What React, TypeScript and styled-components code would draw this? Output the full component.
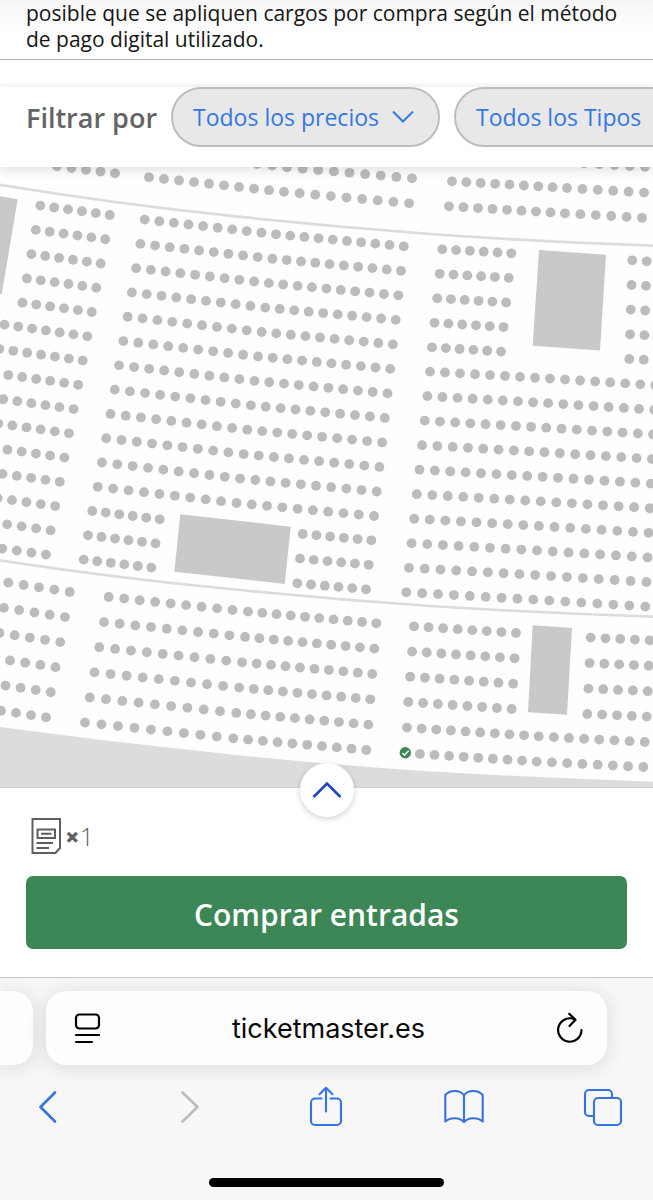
import {useState} from 'react';
import styled, {createGlobalStyle, css} from 'styled-components';

type Point = [number, number];
type SectionType = {
  // 첫 줄과 마지막 줄의 꺾이는 좌표
  first: Point[];
  last: Point[];
  rows: number;
  // 구간별 좌석 간격 수
  gaps: number[];
};

const GlobalStyle = createGlobalStyle`
  * {
    box-sizing: border-box;
  }

  body {
    margin: 0;
    background-color: #fff;
    font-family: 'Open Sans', sans-serif;
  }

  button {
    padding: 0;
    border: 0;
    background: none;
    font-family: inherit;
    cursor: pointer;
  }

  svg {
    display: block;
    flex-shrink: 0;
  }
`;

const AlignCenter = css`
  display: flex;
  justify-content: center;
  align-items: center;
`;

const Wrapper = styled.div`
  min-height: 100vh;
  display: flex;
  flex-direction: column;
  overflow-x: hidden;
`;

const Notice = styled.p`
  margin: 0;
  padding: 0 26px 7px;
  border-bottom: 1px solid #adadad;
  background: linear-gradient(180deg, #f5f5f5 0, #fff 30px);
  color: #161616;
  font-size: 21px;
  line-height: 26px;
`;

const FilterBar = styled.div`
  position: relative;
  z-index: 1;
  margin-top: 27px;
  padding: 0 0 20px 26px;
  display: flex;
  align-items: center;
  gap: 14px;
  background-color: #fff;
  box-shadow: 0 2px 12px rgba(0, 0, 0, 0.14);
  clip-path: inset(-4px 0 -20px 0);
  white-space: nowrap;
`;

const FilterLabel = styled.span`
  color: #646464;
  font-size: 27px;
  font-weight: 600;
`;

const FilterButton = styled.button`
  && {
    height: 60px;
    padding: 0 24px 0 20px;
    border: 2px solid #bdbdbd;
    border-radius: 30px;
    background-color: #e8e8e8;
  }
  ${AlignCenter}
  flex-shrink: 0;
  gap: 13px;
  color: #3478e5;
  font-size: 23px;
`;

const SeatMap = styled.svg`
  width: 100%;
  height: auto;
  background-color: #fefefe;
`;

const BuyPanel = styled.div`
  position: relative;
  padding: 30px 26px 28px;
  border-top: 1px solid #d0d0d0;
  border-bottom: 1px solid #c9c9c9;
  background-color: #fff;
`;

const ToggleButton = styled.button`
  && {
    position: absolute;
    top: -25px;
    left: calc(50% - 27px);
    width: 54px;
    height: 54px;
    border-radius: 50%;
    background-color: #fff;
  }
  ${AlignCenter}
  box-shadow: 0 2px 6px rgba(0, 0, 0, 0.18);
`;

const TicketCount = styled.div`
  display: flex;
  align-items: center;
  gap: 4px;
  padding-left: 5px;
  margin-bottom: 22px;
  color: #5f5f5f;
  font-size: 25px;
  font-weight: 300;
  line-height: 36px;

  & b {
    font-weight: 800;
  }
`;

const BuyButton = styled.button`
  && {
    width: 100%;
    height: 73px;
    padding-top: 3px;
    border-radius: 7px;
    background-color: #3d8656;
  }
  color: #fff;
  font-size: 30px;
  font-weight: 600;
`;

const Browser = styled.footer`
  flex: 1;
  padding-top: 13px;
  display: flex;
  flex-direction: column;
  background-color: #f7f7f7;
`;

const TabRow = styled.div`
  display: flex;
  gap: 13px;
  padding-right: 46px;
`;

const tabCard = css`
  height: 74px;
  background-color: #fdfdfd;
  box-shadow: 0 2px 20px rgba(0, 0, 0, 0.12);
`;

const PreviousTab = styled.div`
  width: 33px;
  border-radius: 0 20px 20px 0;
  ${tabCard}
`;

const AddressBar = styled.div`
  flex: 1;
  padding: 0 23px 0 27px;
  display: flex;
  justify-content: space-between;
  align-items: center;
  border-radius: 20px;
  ${tabCard}
`;

const Address = styled.button`
  color: #0a0a0a;
  && {
    font-family: 'Inter', sans-serif;
  }
  font-size: 27px;
`;

const Toolbar = styled.nav`
  display: flex;
  justify-content: space-between;
  padding: 20px 30px 0 28px;
`;

const HomeIndicator = styled.div`
  width: 36%;
  height: 9px;
  margin: auto auto 13px;
  border-radius: 5px;
  background-color: #000;
`;

// 좌석 구역
const sections: SectionType[] = [
  {first: [[57, 166], [115, 173]], last: [[57, 166], [115, 173]], rows: 1, gaps: [4]},
  {
    first: [[153, 152], [287, 167], [412, 178]],
    last: [[149, 177], [284, 191.5], [409, 203]],
    rows: 2,
    gaps: [9, 8],
  },
  {first: [[584, 163], [645, 166.5]], last: [[584, 163], [645, 166.5]], rows: 1, gaps: [4]},
  {
    first: [[452, 181], [567, 187.7], [644, 192.3]],
    last: [[449, 206], [565, 213], [642, 217.5]],
    rows: 2,
    gaps: [8, 5],
  },
  {first: [[40.3, 205.3], [109.7, 214.7]], last: [[22.4, 302.4], [91.7, 311.7]], rows: 5, gaps: [5]},
  {first: [[-9.3, 322.4], [87.3, 336]], last: [[-56, 540.3], [46, 554.3]], rows: 10, gaps: [7]},
  {
    first: [[144.7, 219.3], [276, 234], [403.7, 246]],
    last: [[97.7, 486.5], [236.5, 502.7], [374, 515.7]],
    rows: 12,
    gaps: [9, 9],
  },
  {first: [[92.3, 510.7], [159.7, 519]], last: [[83.7, 559.3], [151.3, 567.3]], rows: 3, gaps: [5]},
  {first: [[302.7, 533.7], [371.3, 540]], last: [[297.3, 583], [366, 589]], rows: 3, gaps: [5]},
  {first: [[442.3, 249], [511.3, 253]], last: [[432, 347], [501, 351.3]], rows: 5, gaps: [5]},
  {first: [[632.3, 260], [646.7, 261]], last: [[629.3, 358.7], [643.7, 359.4]], rows: 5, gaps: [1]},
  {
    first: [[430, 371.3], [550, 378.3], [655.3, 385]],
    last: [[406.3, 592], [533.3, 599.3], [645.3, 606.3]],
    rows: 10,
    gaps: [8, 7],
  },
  {first: [[-7, 580], [69.7, 591.7]], last: [[-29, 706], [46, 717]], rows: 6, gaps: [5]},
  {
    first: [[108.7, 596.7], [248, 611.3], [376.3, 623]],
    last: [[85, 722.3], [233.3, 738], [366.3, 749.7]],
    rows: 6,
    gaps: [9, 9],
  },
  {first: [[414, 626], [516, 632.7]], last: [[408.3, 701.7], [511.7, 708.7]], rows: 4, gaps: [7]},
  {first: [[590.7, 637.3], [649.7, 640]], last: [[587.3, 713.7], [646.7, 716.3]], rows: 4, gaps: [4]},
  {
    first: [[407, 727.3], [538.7, 736], [644.7, 741.7]],
    last: [[405.3, 752.7], [536.7, 761.3], [643.3, 766.7]],
    rows: 2,
    gaps: [9, 7],
  },
];

const mix = (a: Point, b: Point, t: number): Point => [a[0] + (b[0] - a[0]) * t, a[1] + (b[1] - a[1]) * t];

// 구역 하나의 모든 좌석 좌표 계산
const getSeats = ({first, last, rows, gaps}: SectionType) => {
  const seats: Point[] = [];
  for (let row = 0; row < rows; row++) {
    const stops = first.map((point, i) => mix(point, last[i], rows > 1 ? row / (rows - 1) : 0));
    seats.push(stops[0]);
    gaps.forEach((gap, i) => {
      for (let n = 1; n <= gap; n++) {
        seats.push(mix(stops[i], stops[i + 1], n / gap));
      }
    });
  }
  return seats;
};

const allSeats = sections.flatMap(getSeats);

const Seats = () => (
  <SeatMap viewBox="0 167 653 620" role="img" aria-label="Mapa de asientos">
    <path
      d="M0 727Q110 742 220 753.3Q320 764 420 770.7Q540 778 653 781.7V787H0Z"
      fill="#dcdcdc"
    />
    <g fill="none" stroke="#dcdcdc" strokeWidth="2.7">
      <path d="M-2 184.5Q108 202.5 220 214.7Q325 226 430 234Q540 242 655 245.7" />
      <path d="M-2 560Q108 577 220 588Q325 599 430 606Q540 613 655 616.7" />
    </g>
    <g fill="#c9c9c9">
      <path d="M0 196.3L17.7 199.3L1.7 294.3H0Z" />
      <path d="M539 250L606 254.7L600 350.5L532.7 345.7Z" />
      <path d="M180.3 514.3L290.7 526.7L284.7 584L174.3 571.7Z" />
      <path d="M532.7 625.3L572 628L567 714.7L528 712.3Z" />
    </g>
    <g fill="#bcbcbc">
      {allSeats.map(([x, y], i) => (
        <circle key={i} cx={x} cy={y + 0.3} r="4.9" />
      ))}
    </g>
    <circle cx="405.3" cy="752.7" r="5.7" fill="#3d8656" />
    <path d="M402.3 753L404.5 755.2L408.7 750.6" fill="none" stroke="#fff" strokeWidth="1.4" />
  </SeatMap>
);

const ArrowDown = () => (
  <svg width="22" height="14" viewBox="0 0 22 14" fill="none" stroke="currentColor" strokeWidth="2">
    <path d="M1 1.5L11 11.5L21 1.5" />
  </svg>
);

const App = () => {
  // 티켓 상세 오픈 state
  const [openDetail, setOpenDetail] = useState<boolean>(false);

  return (
    <>
      <GlobalStyle />
      <Wrapper>
        <Notice>
          posible que se apliquen cargos por compra según el método de pago digital utilizado.
        </Notice>
        <FilterBar>
          <FilterLabel>Filtrar por</FilterLabel>
          <FilterButton>
            Todos los precios
            <ArrowDown />
          </FilterButton>
          <FilterButton>
            Todos los Tipos
            <ArrowDown />
          </FilterButton>
        </FilterBar>

        <Seats />

        <BuyPanel>
          <ToggleButton
            aria-label="Ver detalle"
            aria-expanded={openDetail}
            onClick={() => setOpenDetail(!openDetail)}
          >
            <svg width="30" height="18" viewBox="0 0 30 18" fill="none" stroke="#1f45c4" strokeWidth="2.6">
              <path d="M1.5 16L15 2.5L28.5 16" />
            </svg>
          </ToggleButton>
          <TicketCount>
            <svg width="30" height="36" viewBox="0 0 30 36" fill="none" stroke="currentColor" strokeWidth="2">
              <path d="M1.5 1H29V30L24.5 35H1.5Z" />
              <path d="M6.5 11.5H24V20H6.5ZM10 15.7H20.5M5.5 25H22M5.5 30H18" />
            </svg>
            <span>
              <b>×</b>1
            </span>
          </TicketCount>
          <BuyButton>Comprar entradas</BuyButton>
        </BuyPanel>

        <Browser>
          <TabRow>
            <PreviousTab />
            <AddressBar>
              <svg width="28" height="32" viewBox="0 0 28 32" fill="none" stroke="#000" strokeWidth="2.2" strokeLinecap="round">
                <rect x="3" y="2.5" width="23" height="14" rx="3.5" />
                <path d="M3 23H26M3 30H19" />
              </svg>
              <Address>ticketmaster.es</Address>
              <button aria-label="Recargar">
                <svg width="28" height="32" viewBox="0 0 28 32" fill="none" stroke="#000" strokeWidth="2.2" strokeLinecap="round" strokeLinejoin="round">
                  <path d="M25.5 18A11.7 11.7 0 1 1 18.5 7.3" />
                  <path d="M13.2 1.8L19.5 7.8L13.5 14" />
                </svg>
              </button>
            </AddressBar>
          </TabRow>
          <Toolbar>
            <button aria-label="Atrás">
              <svg width="40" height="44" viewBox="0 0 40 44" fill="none" stroke="#3475e0" strokeWidth="2.6" strokeLinecap="round" strokeLinejoin="round">
                <path d="M27 7.5L12.5 22L27 36.5" />
              </svg>
            </button>
            <button aria-label="Adelante">
              <svg width="40" height="44" viewBox="0 0 40 44" fill="none" stroke="#bcbcbc" strokeWidth="2.6" strokeLinecap="round" strokeLinejoin="round">
                <path d="M15.5 7.5L30.5 22L15.5 36.5" />
              </svg>
            </button>
            <button aria-label="Compartir">
              <svg width="40" height="44" viewBox="0 0 40 44" fill="none" stroke="#3475e0" strokeWidth="2.1" strokeLinecap="round" strokeLinejoin="round">
                <path d="M15.5 13.5H9a4 4 0 0 0-4 4V36a4 4 0 0 0 4 4H31a4 4 0 0 0 4-4V17.5a4 4 0 0 0-4-4H24.5" />
                <path d="M20 26.5V2.8M13.5 9.3L20 2.8L26.5 9.3" />
              </svg>
            </button>
            <button aria-label="Marcadores">
              <svg width="40" height="44" viewBox="0 0 40 44" fill="none" stroke="#3475e0" strokeWidth="2.1" strokeLinejoin="round">
                <path d="M20 10.5C16 4.5 6 4.5 1.3 10V36.5C6 32 16 32 20 37.2C24 32 34 32 38.7 36.5V10C34 4.5 24 4.5 20 10.5V37" />
              </svg>
            </button>
            <button aria-label="Pestañas">
              <svg width="40" height="44" viewBox="0 0 40 44" fill="none" stroke="#3475e0" strokeWidth="2.1">
                <path d="M11 31H6a4 4 0 0 1-4-4V9a4 4 0 0 1 4-4H25a4 4 0 0 1 4 4V13" />
                <rect x="11" y="13" width="27" height="27" rx="4" />
              </svg>
            </button>
          </Toolbar>
          <HomeIndicator />
        </Browser>
      </Wrapper>
    </>
  );
};

export default App;
